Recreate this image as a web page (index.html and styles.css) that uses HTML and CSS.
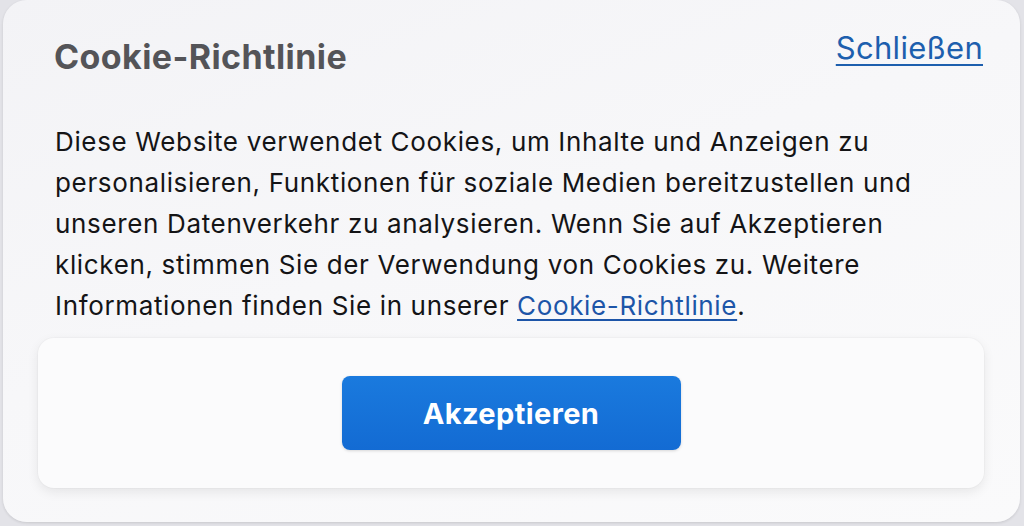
FILE: index.html
```html
<!DOCTYPE html>
<html lang="de">
	<head>
		<meta charset="utf-8">
		<title>Cookie-Richtlinie</title>
		<link rel="stylesheet" href="styles.css">
	</head>
	<body>
		<div class="dialog">
			<div class="head">
				<h1 class="title">Cookie-Richtlinie</h1>
				<a class="close" href="#">Schließen</a>
			</div>

			<p class="text">
				Diese Website verwendet Cookies, um Inhalte und Anzeigen zu personalisieren, Funktionen für soziale Medien bereitzustellen und unseren Datenverkehr zu analysieren. Wenn Sie auf Akzeptieren klicken, stimmen Sie der Verwendung von Cookies zu. Weitere Informationen finden Sie in unserer <a class="link" href="#">Cookie-Richtlinie</a>.
			</p>

			<div class="actions">
				<button class="accept" type="button">Akzeptieren</button>
			</div>
		</div>
	</body>
</html>
```

FILE: styles.css
```css
html, body {
	margin: 0;
	height: 100%;
}
body {
	background: #e3e3e8;
	font-family: Inter, Roboto, "Liberation Sans", sans-serif;
	overflow: hidden;
}
.dialog {
	box-sizing: border-box;
	height: 522px;
	margin: 0 4px 0 3px;
	padding: 24px 36px 0 35px;
	border-radius: 24px;
	background: linear-gradient(160deg, #f3f3f6 0%, #f7f7f9 45%, #fafafb 100%);
	box-shadow: 0 1px 3px rgba(0, 0, 0, 0.12);
}
.head {
	display: flex;
	justify-content: space-between;
	align-items: flex-start;
	padding: 0 1px 0 16px;
}
.title {
	margin: 12px 0 0 0;
	font-size: 34px;
	font-weight: 700;
	color: #545458;
	letter-spacing: 0.4px;
}
.close {
	font-size: 31px;
	color: #1d5fae;
	letter-spacing: 0.3px;
	text-decoration: underline;
	text-decoration-thickness: 2px;
	text-underline-offset: 5px;
	margin-top: 5px;
}
.text {
	margin: 44px 0 0 0;
	padding: 0 60px 0 17px;
	font-size: 26px;
	line-height: 41px;
	letter-spacing: 0.65px;
	color: #141416;
}
.link {
	color: #1d55a8;
	text-decoration-thickness: 2px;
	text-underline-offset: 4px;
}
.actions {
	margin-top: 12px;
	height: 150px;
	display: flex;
	justify-content: center;
	align-items: center;
	background: #fbfbfc;
	border-radius: 16px;
	box-shadow: 0 4px 12px rgba(0, 0, 0, 0.08), 0 0 0 1px rgba(0, 0, 0, 0.02);
}
.accept {
	width: 339px;
	height: 74px;
	border: none;
	border-radius: 8px;
	background: linear-gradient(180deg, #1a7ade 0%, #136bd3 100%);
	color: #ffffff;
	font-family: Inter, Roboto, "Liberation Sans", sans-serif;
	font-size: 29px;
	font-weight: 700;
	letter-spacing: 0.4px;
	box-shadow: 0 1px 3px rgba(0, 0, 0, 0.15);
}
```
